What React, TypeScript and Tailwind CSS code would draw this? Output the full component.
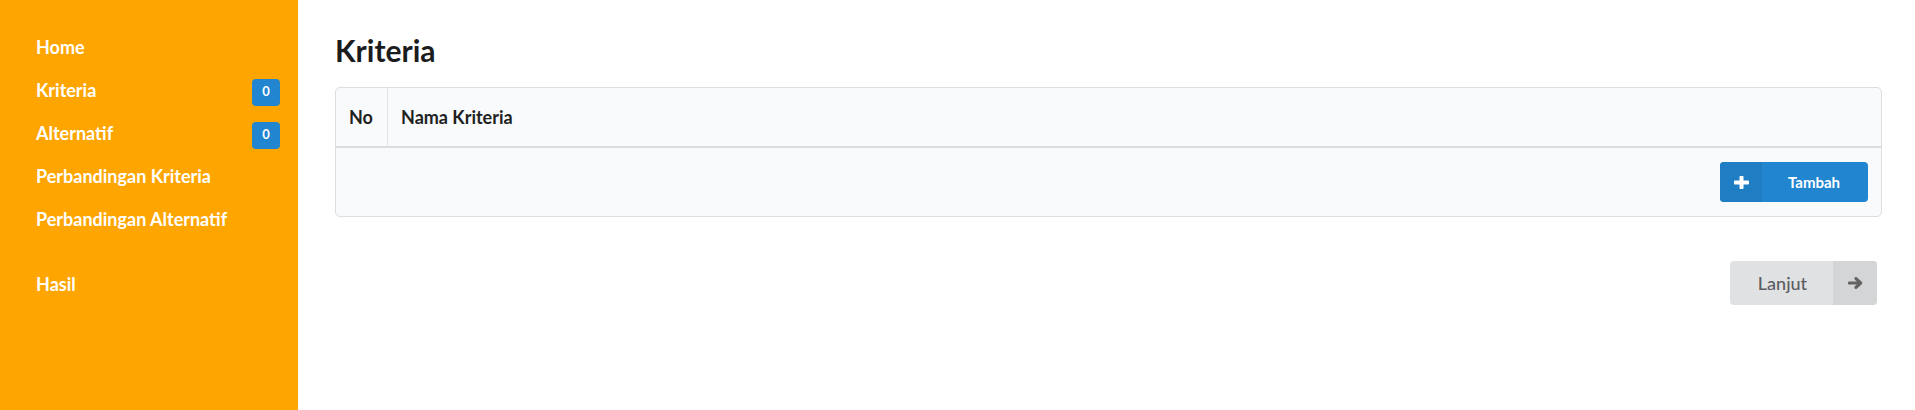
import React from "react";

const font = { fontFamily: "Lato, 'Noto Sans', sans-serif" };

function Badge() {
  return (
    <span className="mt-[3px] flex h-[27px] w-[28px] items-center justify-center rounded-[4px] bg-[#2185d0] text-[13px] font-bold text-white">
      0
    </span>
  );
}

function MenuItem({ label, badge }: { label: string; badge?: boolean }) {
  return (
    <div className="flex h-[43px] items-center justify-between pl-[36px] pr-[18px] text-[18px] font-bold text-white">
      <span>{label}</span>
      {badge ? <Badge /> : null}
    </div>
  );
}

export default function App() {
  return (
    <div className="flex min-h-[410px] w-full bg-white" style={font}>
      <aside className="w-[298px] shrink-0 bg-[#ffa500] pt-[26px]">
        <MenuItem label="Home" />
        <MenuItem label="Kriteria" badge />
        <MenuItem label="Alternatif" badge />
        <MenuItem label="Perbandingan Kriteria" />
        <MenuItem label="Perbandingan Alternatif" />
        <div className="h-[22px]" />
        <MenuItem label="Hasil" />
      </aside>
      <main className="flex-1 pl-[37px] pr-[33px] pt-[35px]">
        <h1 className="h-[30px] text-[30px] font-bold leading-[30px] text-[#1b1c1d]">Kriteria</h1>
        <div className="mt-[22px] overflow-hidden rounded-[5px] border border-[#dededf] bg-[#f9fafb]">
          <div className="flex h-[58px] items-center text-[18px] font-bold text-[#212121]">
            <div className="flex h-full w-[52px] items-center border-r border-[#e3e4e5] pl-[13px]">No</div>
            <div className="pl-[13px]">Nama Kriteria</div>
          </div>
          <div className="h-[2px] bg-[#dcdddf]" />
          <div className="flex h-[68px] items-center justify-end pr-[13px]">
            <button className="flex h-[40px] w-[148px] overflow-hidden rounded-[4px] bg-[#2185d0] text-[15px] font-bold text-white">
              <span className="flex h-full w-[42px] items-center justify-center bg-[#1f7dc4]">
                <svg width="15" height="13" viewBox="0 0 15 13">
                  <rect x="5.5" y="0" width="4" height="13" rx="0.8" fill="white" />
                  <rect x="0" y="4.5" width="15" height="4" rx="0.8" fill="white" />
                </svg>
              </span>
              <span className="flex h-full flex-1 items-center justify-center pr-[2px]">Tambah</span>
            </button>
          </div>
        </div>
        <div className="mt-[44px] flex justify-end pr-[5px]">
          <button className="flex h-[44px] w-[147px] overflow-hidden rounded-[4px] bg-[#e0e1e2] text-[18px] font-medium text-[#5b5d63]">
            <span className="flex h-full flex-1 items-center justify-center pl-[2px]">Lanjut</span>
            <span className="flex h-full w-[44px] items-center justify-center bg-[#d4d5d6]">
              <svg width="15" height="12" viewBox="0 0 15 12">
                <path d="M1.5 6 H12" stroke="#636363" strokeWidth="3.2" strokeLinecap="round" />
                <path d="M8 1.6 L12.6 6 L8 10.4" stroke="#636363" strokeWidth="3.2" fill="none" strokeLinecap="round" strokeLinejoin="round" />
              </svg>
            </span>
          </button>
        </div>
      </main>
    </div>
  );
}
